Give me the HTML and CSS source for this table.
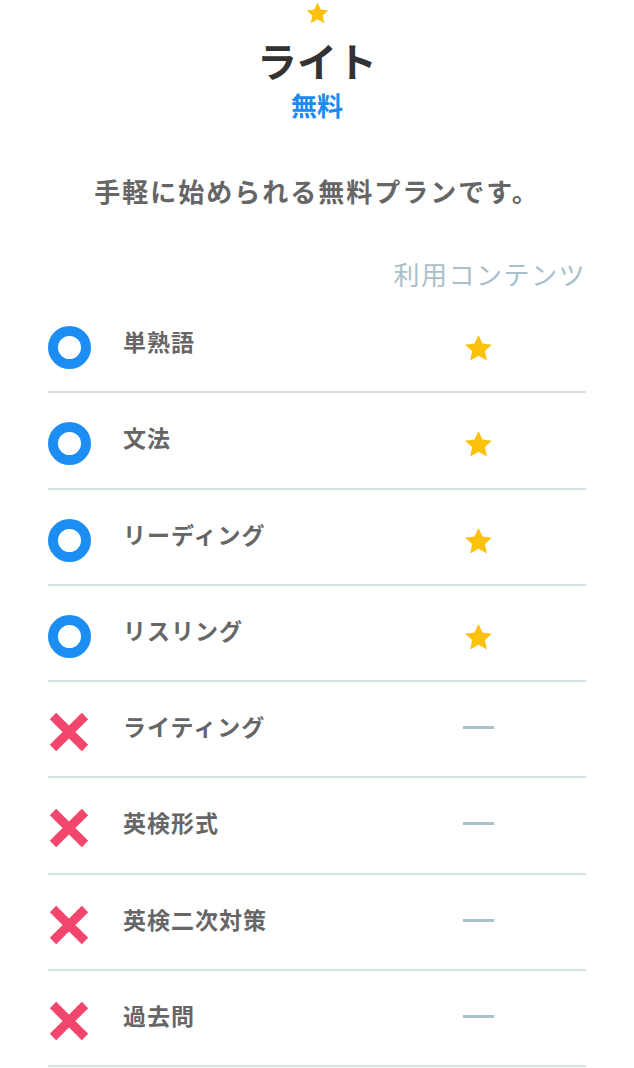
FILE: index.html
```html
<!DOCTYPE html>
<html lang="ja">
<head>
<meta charset="utf-8">
<link rel="stylesheet" href="styles.css">
</head>
<body>
<div class="page">
  <header class="plan-head">
    <svg class="head-star" viewBox="0 0 24 24" width="25" height="25"><polygon points="12,1.5 15.1,8.2 22.4,9 17,14 18.5,21.3 12,17.6 5.5,21.3 7,14 1.6,9 8.9,8.2" fill="#fcc10c"/></svg>
    <h1 class="plan-name">ライト</h1>
    <div class="plan-price">無料</div>
    <p class="plan-desc">手軽に始められる無料プランです。</p>
  </header>

  <div class="col-head">利用コンテンツ</div>

  <ul class="feature-list">
    <li class="feature">
      <span class="mark"><svg viewBox="0 0 43 43" width="43" height="43"><circle cx="21.5" cy="21.5" r="16.5" fill="none" stroke="#1c8ef3" stroke-width="10"/></svg></span>
      <span class="label">単熟語</span>
      <span class="val"><svg class="star" viewBox="0 0 24 24" width="31" height="31"><polygon points="12,1.5 15.1,8.2 22.4,9 17,14 18.5,21.3 12,17.6 5.5,21.3 7,14 1.6,9 8.9,8.2" fill="#fcc10c"/></svg></span>
    </li>
    <li class="feature">
      <span class="mark"><svg viewBox="0 0 43 43" width="43" height="43"><circle cx="21.5" cy="21.5" r="16.5" fill="none" stroke="#1c8ef3" stroke-width="10"/></svg></span>
      <span class="label">文法</span>
      <span class="val"><svg class="star" viewBox="0 0 24 24" width="31" height="31"><polygon points="12,1.5 15.1,8.2 22.4,9 17,14 18.5,21.3 12,17.6 5.5,21.3 7,14 1.6,9 8.9,8.2" fill="#fcc10c"/></svg></span>
    </li>
    <li class="feature">
      <span class="mark"><svg viewBox="0 0 43 43" width="43" height="43"><circle cx="21.5" cy="21.5" r="16.5" fill="none" stroke="#1c8ef3" stroke-width="10"/></svg></span>
      <span class="label">リーディング</span>
      <span class="val"><svg class="star" viewBox="0 0 24 24" width="31" height="31"><polygon points="12,1.5 15.1,8.2 22.4,9 17,14 18.5,21.3 12,17.6 5.5,21.3 7,14 1.6,9 8.9,8.2" fill="#fcc10c"/></svg></span>
    </li>
    <li class="feature">
      <span class="mark"><svg viewBox="0 0 43 43" width="43" height="43"><circle cx="21.5" cy="21.5" r="16.5" fill="none" stroke="#1c8ef3" stroke-width="10"/></svg></span>
      <span class="label">リスリング</span>
      <span class="val"><svg class="star" viewBox="0 0 24 24" width="31" height="31"><polygon points="12,1.5 15.1,8.2 22.4,9 17,14 18.5,21.3 12,17.6 5.5,21.3 7,14 1.6,9 8.9,8.2" fill="#fcc10c"/></svg></span>
    </li>
    <li class="feature">
      <span class="mark"><svg viewBox="0 0 42 42" width="42" height="42"><path d="M5 5 L37 37 M37 5 L5 37" stroke="#f3466c" stroke-width="9" fill="none"/></svg></span>
      <span class="label">ライティング</span>
      <span class="val"><span class="dash"></span></span>
    </li>
    <li class="feature">
      <span class="mark"><svg viewBox="0 0 42 42" width="42" height="42"><path d="M5 5 L37 37 M37 5 L5 37" stroke="#f3466c" stroke-width="9" fill="none"/></svg></span>
      <span class="label">英検形式</span>
      <span class="val"><span class="dash"></span></span>
    </li>
    <li class="feature">
      <span class="mark"><svg viewBox="0 0 42 42" width="42" height="42"><path d="M5 5 L37 37 M37 5 L5 37" stroke="#f3466c" stroke-width="9" fill="none"/></svg></span>
      <span class="label">英検二次対策</span>
      <span class="val"><span class="dash"></span></span>
    </li>
    <li class="feature">
      <span class="mark"><svg viewBox="0 0 42 42" width="42" height="42"><path d="M5 5 L37 37 M37 5 L5 37" stroke="#f3466c" stroke-width="9" fill="none"/></svg></span>
      <span class="label">過去問</span>
      <span class="val"><span class="dash"></span></span>
    </li>
  </ul>
</div>
</body>
</html>
```

FILE: styles.css
```css
* { box-sizing: border-box; }
html, body { margin: 0; padding: 0; background: #fff; }
body {
  font-family: "Noto Sans CJK JP", "Noto Sans", sans-serif;
  color: #666;
}
.page {
  width: 634px;
  padding: 0 48px;
}
.plan-head {
  display: flex;
  flex-direction: column;
  align-items: center;
}
.head-star {
  display: block;
  margin-top: 1px;
}
.plan-name {
  margin: 12px 0 0;
  font-size: 40px;
  line-height: 44px;
  font-weight: 700;
  color: #333;
}
.plan-price {
  margin-top: 8px;
  font-size: 26px;
  line-height: 30px;
  font-weight: 700;
  color: #1a8cf4;
}
.plan-desc {
  margin: 53px 0 0;
  font-size: 26px;
  line-height: 36px;
  letter-spacing: 2px;
  font-weight: 700;
  color: #666;
}
.col-head {
  margin-top: 48px;
  text-align: right;
  font-size: 26px;
  line-height: 34px;
  letter-spacing: 1.5px;
  margin-right: 0;
  color: #a9bfca;
}
.feature-list {
  list-style: none;
  margin: 6px 0 0;
  padding: 0;
}
.feature {
  display: grid;
  grid-template-columns: 75px 1fr 60px;
  padding-right: 78px;
  height: 96.3px;
  border-bottom: 2px solid #d7e0e4;
  align-items: start;
}
.mark {
  display: block;
  margin-top: 29px;
  height: 43px;
}
.mark svg { display: block; }
.label {
  margin-top: 28px;
  font-size: 23px;
  line-height: 32px;
  letter-spacing: 1px;
  font-weight: 700;
  color: #666;
}
.val {
  display: flex;
  justify-content: center;
}
.star {
  display: block;
  margin-top: 36px;
}
.dash {
  display: block;
  width: 31px;
  height: 3px;
  margin-top: 44px;
  background: #a9bfca;
}
```
